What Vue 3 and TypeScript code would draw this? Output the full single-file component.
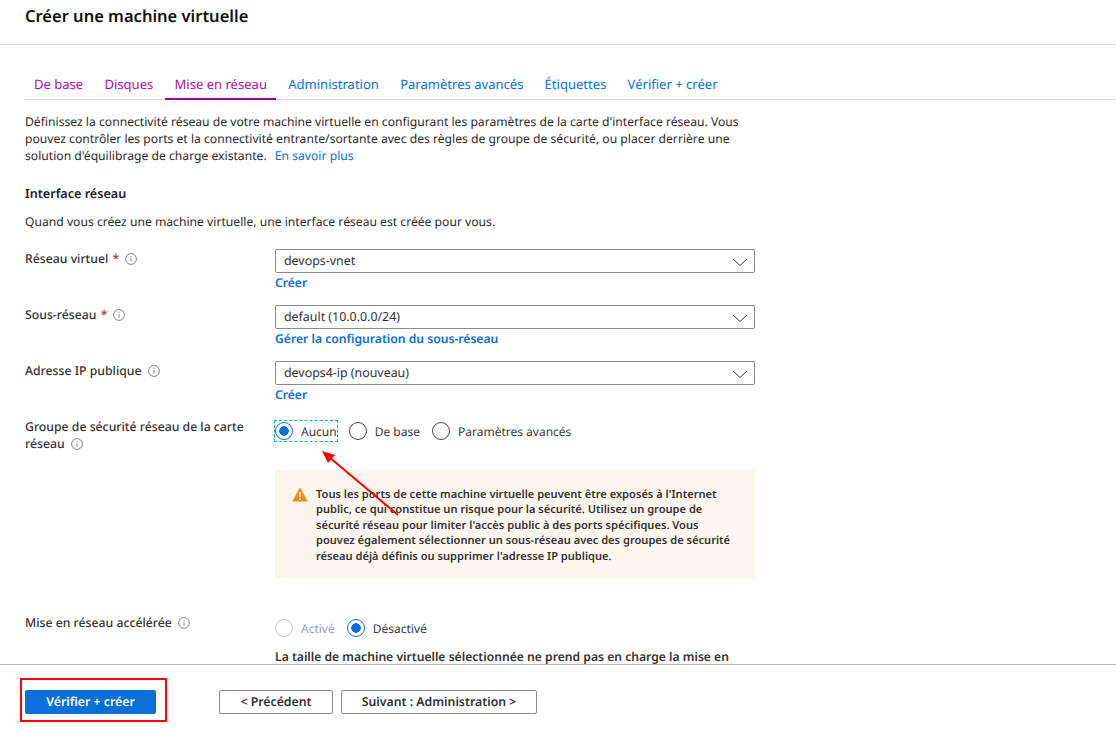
<template>
  <div class="page">
    <header class="page-header">
      <h1>Créer une machine virtuelle</h1>
    </header>

    <main class="page-body">
      <nav class="tabs">
        <a
          v-for="tab in tabs"
          :key="tab.label"
          class="tab"
          :class="{ visited: tab.visited, active: tab.active }"
        >{{ tab.label }}</a>
      </nav>

      <p class="intro">
        Définissez la connectivité réseau de votre machine virtuelle en configurant les paramètres de la carte d'interface réseau. Vous
        pouvez contrôler les ports et la connectivité entrante/sortante avec des règles de groupe de sécurité, ou placer derrière une
        solution d'équilibrage de charge existante.
        <a class="link more">En savoir plus</a>
      </p>

      <h2>Interface réseau</h2>
      <p class="sub">Quand vous créez une machine virtuelle, une interface réseau est créée pour vous.</p>

      <div v-for="field in fields" :key="field.label" class="form-row">
        <div class="label">
          {{ field.label }}
          <span v-if="field.required" class="req">*</span>
          <svg class="info" viewBox="0 0 12 12">
            <circle cx="6" cy="6" r="5.4" />
            <path d="M6 5.2v3.4M6 3.2v1" />
          </svg>
        </div>
        <div class="control">
          <div class="select">
            <span>{{ field.value }}</span>
            <svg class="chevron" viewBox="0 0 14 7">
              <path d="M.5 .5L7 6.5L13.5 .5" />
            </svg>
          </div>
          <a class="link action">{{ field.action }}</a>
        </div>
      </div>

      <div class="form-row nsg-row">
        <div class="label">
          Groupe de sécurité réseau de la carte réseau
          <svg class="info" viewBox="0 0 12 12">
            <circle cx="6" cy="6" r="5.4" />
            <path d="M6 5.2v3.4M6 3.2v1" />
          </svg>
        </div>
        <div class="control">
          <div class="radios">
            <label class="radio focused"><span class="dot on"></span>Aucun</label>
            <label class="radio"><span class="dot"></span>De base</label>
            <label class="radio"><span class="dot"></span>Paramètres avancés</label>
          </div>
          <div class="warning">
            <svg class="warn-icon" viewBox="0 0 16 15">
              <path d="M8 .5L15.8 14.5H.2z" fill="#f7890b" />
              <path d="M8 5v5M8 11v2" stroke="#fff" stroke-width="1.6" />
            </svg>
            <p>
              Tous les ports de cette machine virtuelle peuvent être exposés à l'Internet
              public, ce qui constitue un risque pour la sécurité. Utilisez un groupe de
              sécurité réseau pour limiter l'accès public à des ports spécifiques. Vous
              pouvez également sélectionner un sous-réseau avec des groupes de sécurité
              réseau déjà définis ou supprimer l'adresse IP publique.
            </p>
          </div>
        </div>
      </div>

      <div class="form-row accel-row">
        <div class="label">
          Mise en réseau accélérée
          <svg class="info" viewBox="0 0 12 12">
            <circle cx="6" cy="6" r="5.4" />
            <path d="M6 5.2v3.4M6 3.2v1" />
          </svg>
        </div>
        <div class="control">
          <div class="radios">
            <label class="radio disabled"><span class="dot"></span>Activé</label>
            <label class="radio"><span class="dot on"></span>Désactivé</label>
          </div>
          <p class="accel-note">La taille de machine virtuelle sélectionnée ne prend pas en charge la mise en réseau accélérée.</p>
        </div>
      </div>
    </main>

    <footer class="page-footer">
      <button class="btn primary">Vérifier + créer</button>
      <button class="btn prev">&lt; Précédent</button>
      <button class="btn next">Suivant : Administration &gt;</button>
    </footer>

    <!-- annotations posees sur la capture -->
    <div class="mark-box"></div>
    <svg class="mark-arrow" width="1116" height="741" viewBox="0 0 1116 741">
      <path d="M398 515L329 457" stroke="#f00" stroke-width="2" fill="none" />
      <path d="M322 451L335 455L328 463z" fill="#f00" />
    </svg>
  </div>
</template>

<script setup lang="ts">
interface Tab {
  label: string;
  visited?: boolean;
  active?: boolean;
}

const tabs: Tab[] = [
  { label: 'De base', visited: true },
  { label: 'Disques', visited: true },
  { label: 'Mise en réseau', visited: true, active: true },
  { label: 'Administration' },
  { label: 'Paramètres avancés' },
  { label: 'Étiquettes' },
  { label: 'Vérifier + créer' },
];

const fields = [
  { label: 'Réseau virtuel', required: true, value: 'devops-vnet', action: 'Créer' },
  { label: 'Sous-réseau', required: true, value: 'default (10.0.0.0/24)', action: 'Gérer la configuration du sous-réseau' },
  { label: 'Adresse IP publique', required: false, value: 'devops4-ip (nouveau)', action: 'Créer' },
];
</script>

<style>
html,
body {
  margin: 0;
  background: #fff;
}
</style>

<style scoped>
.page {
  position: relative;
  display: flex;
  flex-direction: column;
  height: 741px;
  overflow: hidden;
  font-family: "Noto Sans", "Open Sans", sans-serif;
  font-size: 12.15px;
  line-height: 17px;
  color: #2b2b2b;
  text-rendering: geometricPrecision;
}

.page-header {
  flex: none;
  height: 44px;
  padding-left: 25px;
  border-bottom: 1px solid #d6d6d6;
}

h1 {
  margin: 5px 0 0;
  font-size: 16.5px;
  line-height: 22px;
  font-weight: 600;
  color: #111;
}

.page-body {
  flex: 1;
  min-height: 0;
  overflow: hidden;
  padding-left: 25px;
}

.tabs {
  display: flex;
  margin-top: 23px;
  height: 31px;
  border-bottom: 1px solid #d6d6d6;
}

.tab {
  box-sizing: border-box;
  height: 32px;
  padding: 7px 9px 0;
  margin-right: 3.2px;
  font-size: 13.05px;
  line-height: 19px;
  color: #0a6fd6;
}

.tab.visited {
  color: #a80fae;
}

.tab.active {
  border-bottom: 2px solid #a4009f;
}

.intro {
  margin: 13px 0 0;
  width: 730px;
}

.link {
  color: #0a6fd6;
}

.more {
  margin-left: 5px;
}

h2 {
  margin: 21px 0 0;
  font-size: 12.6px;
  line-height: 17px;
  font-weight: 600;
  color: #222;
}

.sub {
  margin: 11px 0 0;
}

.form-row {
  display: grid;
  grid-template-columns: 250px 480px;
  height: 56px;
}

.sub + .form-row {
  margin-top: 19px;
}

.label {
  padding-top: 1px;
  width: 226px;
  font-size: 12.25px;
  font-weight: 500;
  color: #333;
}

.req {
  color: #c4262e;
  margin: 0 3px 0 1px;
}

.info {
  width: 12px;
  height: 12px;
  margin-left: 3px;
  vertical-align: -2px;
  fill: none;
  stroke: #666;
  stroke-width: 0.8;
}

.select {
  box-sizing: border-box;
  display: flex;
  align-items: center;
  justify-content: space-between;
  height: 24px;
  padding: 0 7px 0 8px;
  border: 1px solid #8a8a8a;
  border-radius: 2px;
  font-size: 12.4px;
  color: #333;
}

.select span {
  position: relative;
  top: -1px;
}

.chevron {
  width: 14px;
  height: 7px;
  margin-top: 3px;
  fill: none;
  stroke: #333;
  stroke-width: 1;
}

.action {
  display: block;
  margin-top: 1px;
  line-height: 18px;
  font-weight: 600;
}

.nsg-row {
  height: auto;
}

.radios {
  display: flex;
  align-items: center;
  height: 22px;
  margin-top: 3px;
  gap: 12px;
  font-size: 12px;
}

.radio {
  display: flex;
  align-items: center;
  gap: 8px;
  height: 20px;
  color: #3a3a3a;
}

.dot {
  box-sizing: border-box;
  width: 18px;
  height: 18px;
  border: 1px solid #444;
  border-radius: 50%;
}

.dot.on {
  border-color: #0a6fd6;
  background: radial-gradient(circle, #0a6fd6 0 4.5px, #fff 5px);
}

.focused {
  outline: 1px dashed #1aa3e0;
}

.disabled {
  color: #a0a0a0;
}

.disabled .dot {
  border-color: #c4c4c4;
}

.warning {
  box-sizing: border-box;
  display: flex;
  gap: 8px;
  height: 108px;
  margin-top: 28px;
  padding: 17px 16px 0 17px;
  background: #fdf6ee;
}

.warn-icon {
  flex: none;
  width: 16px;
  height: 15px;
}

.warning p {
  margin: 0;
  width: 420px;
  font-size: 11.1px;
  line-height: 15.4px;
  font-weight: 600;
  color: #333;
}

.accel-row {
  margin-top: 35px;
}

.accel-row .radios {
  margin-top: 4px;
}

.accel-note {
  margin: 9px 0 0;
  font-weight: 600;
  color: #333;
}

.page-footer {
  flex: none;
  display: flex;
  align-items: flex-start;
  height: 77px;
  box-sizing: border-box;
  padding: 25px 0 0 25px;
  border-top: 1px solid #bdbdbd;
}

.btn {
  box-sizing: border-box;
  height: 24px;
  padding: 0 0 2px;
  border: 1px solid #8a8a8a;
  border-radius: 2px;
  background: #fff;
  font-family: inherit;
  font-size: 12.3px;
  font-weight: 600;
  color: #333;
  text-rendering: geometricPrecision;
}

.primary {
  width: 131px;
  border-color: #0a6fd6;
  background: #0a6fd6;
  color: #fff;
}

.prev {
  width: 114px;
  margin-left: 63px;
}

.next {
  width: 196px;
  margin-left: 8px;
}

.mark-box {
  position: absolute;
  left: 20px;
  top: 678px;
  box-sizing: border-box;
  width: 147px;
  height: 44px;
  border: 2px solid #f00;
}

.mark-arrow {
  position: absolute;
  left: 0;
  top: 0;
  pointer-events: none;
}
</style>
